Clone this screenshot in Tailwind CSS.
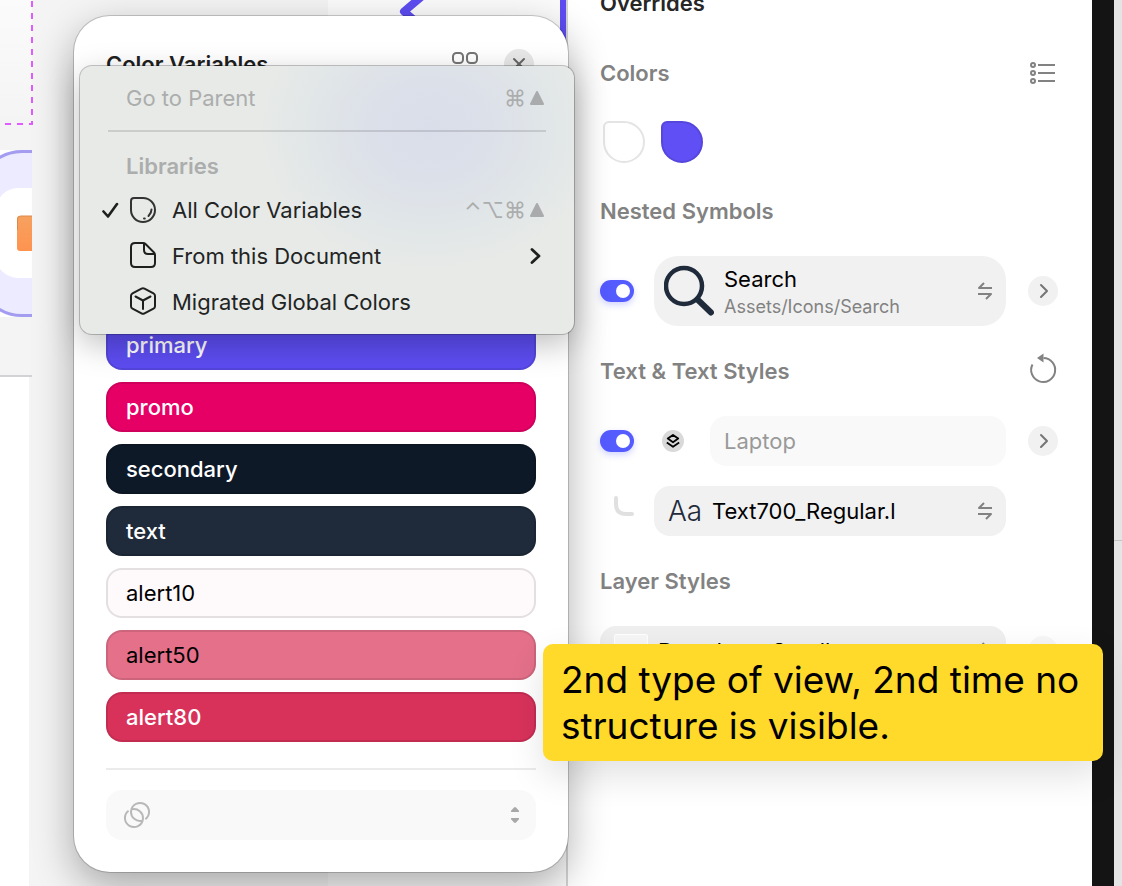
<!DOCTYPE html>
<html lang="en">
<head>
<meta charset="utf-8">
<meta name="viewport" content="width=device-width, initial-scale=1">
<title>Color Variables</title>
<script src="https://cdn.jsdelivr.net/npm/@tailwindcss/browser@4"></script>
</head>
<body class="relative flex h-screen overflow-hidden bg-white font-[Inter,sans-serif] text-[22px] leading-[30px] text-black">

<!-- Canvas -->
<main class="relative flex min-w-0 flex-1 overflow-hidden bg-[#fbfbfb]">
  <div class="w-[328px] shrink-0 bg-[#f4f4f4]">
    <svg class="block" width="34" height="886" viewBox="0 0 34 886" aria-hidden="true">
      <defs><linearGradient id="fade" x1="0" y1="0" x2="0" y2="1"><stop offset="0" stop-color="#fbfbfb"/><stop offset="1" stop-color="#f4f4f4"/></linearGradient>
      <linearGradient id="orange" x1="0" y1="0" x2="0" y2="1"><stop offset="0" stop-color="#f6a15f"/><stop offset="1" stop-color="#ff9350"/></linearGradient>
      <clipPath id="frame"><rect width="32" height="886"/></clipPath></defs>
      <g clip-path="url(#frame)">
        <rect width="32" height="124" fill="url(#fade)"/>
        <rect y="150" width="32" height="167" fill="#fff"/>
        <rect x="-22" y="151.500" width="120" height="164" rx="44" fill="#edebff" stroke="#a39cf0" stroke-width="3"/>
        <rect x="-4" y="188" width="80" height="90" rx="22" fill="#fff"/>
        <rect x="17" y="216" width="30" height="35" rx="3" fill="url(#orange)"/>
        <path d="M17.500 230v-11q0-3 3-3h12" fill="none" stroke="#dc8a4c"/>
        <path d="M0 376h32" stroke="#d2d2d6" stroke-width="2"/>
        <rect y="377" width="29" height="509" fill="#fff"/>
      </g>
      <path d="M32 1v124" stroke="#e05cff" stroke-width="2" stroke-dasharray="6 6"/>
      <path d="M5 124h28" stroke="#e05cff" stroke-width="2" stroke-dasharray="6 6"/>
    </svg>
  </div>
  <div class="flex flex-1 items-start justify-between">
    <svg class="ml-[66px]" width="40" height="30" viewBox="0 0 40 30" fill="none" aria-hidden="true"><path d="M33-8 10 11.500 33 31" stroke="#5d4df2" stroke-width="8" stroke-linecap="round" stroke-linejoin="round"/></svg>
    <div class="h-16 w-1.5 bg-[#5d4df2]"></div>
  </div>
</main>

<!-- Inspector -->
<aside class="w-[526px] shrink-0 overflow-hidden border-l-2 border-[#d3d3d5] bg-white pr-[34px] pl-8">
  <h1 class="-mt-3 font-semibold text-[#262626]">Overrides</h1>

  <div class="mt-10 flex items-center justify-between font-semibold text-[#828282]">
    <h2>Colors</h2>
    <button type="button" aria-label="Show as list" class="pr-0.5">
      <svg width="28" height="24" viewBox="0 0 28 24" fill="none" stroke="#828282" stroke-width="2"><circle cx="5" cy="4" r="2"/><circle cx="5" cy="12" r="2"/><circle cx="5" cy="20" r="2"/><path d="M10 4h17M10 12h17M10 20h17"/></svg>
    </button>
  </div>
  <div class="mt-[33px] flex gap-4 pl-[3px]">
    <button type="button" aria-label="White" class="size-[42px] rounded-[21px] rounded-tl-[6px] border-2 border-[#e4e4e4] bg-white"></button>
    <button type="button" aria-label="Primary" class="size-[42px] rounded-[21px] rounded-tl-[6px] border-2 border-[#5546dc] bg-[#604ff5]"></button>
  </div>

  <h2 class="mt-[33px] font-semibold text-[#828282]">Nested Symbols</h2>
  <div class="mt-[30px] flex items-center">
    <input type="checkbox" checked aria-label="Search override" class="grid h-[22px] w-[34px] shrink-0 appearance-none items-center justify-end rounded-full bg-[#545bff] pr-1 shadow-[0_3px_6px_#545bff40] before:size-3.5 before:rounded-full before:bg-white before:content-['']">
    <button type="button" class="ml-5 flex h-[70px] min-w-0 flex-1 items-center rounded-3xl bg-[#f1f1f1] pr-3 pl-2.5 text-left">
      <svg class="shrink-0" width="50" height="52" viewBox="0 0 50 52" fill="none" stroke="#1f2a3a" aria-hidden="true"><circle cx="20" cy="21" r="18" stroke-width="4.500"/><path d="m33.500 34.500 13.500 13" stroke-width="6" stroke-linecap="round"/></svg>
      <span class="ml-2.5 flex-1 pt-1"><span class="block leading-7">Search</span><span class="block text-[18px] leading-7 text-[#828282]">Assets/Icons/Search</span></span>
      <svg width="18" height="20" viewBox="0 0 18 20" fill="none" stroke="#828282" stroke-width="2" stroke-linejoin="round" aria-hidden="true"><path d="M16 7H3l5-5M2 13h13l-5 5"/></svg>
    </button>
    <button type="button" aria-label="Open Search" class="ml-[22px] grid size-[30px] place-items-center rounded-full bg-[#f1f1f1]">
      <svg width="16" height="16" viewBox="0 0 16 16" fill="none" stroke="#757575" stroke-width="2" stroke-linecap="round" stroke-linejoin="round"><path d="m6 2 6 6-6 6"/></svg>
    </button>
  </div>

  <div class="mt-[30px] flex items-center justify-between font-semibold text-[#828282]">
    <h2>Text &amp; Text Styles</h2>
    <button type="button" aria-label="Reset text">
      <svg class="overflow-visible" width="30" height="30" viewBox="0 0 30 30" fill="none" stroke="#828282" stroke-width="2"><path d="M4.500 8.500A12 12 0 1 0 15.500 2"/><path d="M15.500-2.500 9 2l6.500 4.500z" fill="#828282" stroke="none"/></svg>
    </button>
  </div>
  <div class="mt-[30px] flex items-center">
    <input type="checkbox" checked aria-label="Laptop override" class="grid h-[22px] w-[34px] shrink-0 appearance-none items-center justify-end rounded-full bg-[#545bff] pr-1 shadow-[0_3px_6px_#545bff40] before:size-3.5 before:rounded-full before:bg-white before:content-['']">
    <button type="button" aria-label="Layer data" class="ml-7 grid size-[22px] place-items-center rounded-full bg-[#d9d9d9]">
      <svg width="14" height="14" viewBox="0 0 14 14" fill="none" stroke="#000" stroke-width="1.800" stroke-linejoin="round"><path d="M7 .9 12.200 4.600 7 8.300 1.800 4.600z"/><path d="m.8 8.600 6.200 4.200 6.200-4.200"/></svg>
    </button>
    <input type="text" aria-label="Text override" placeholder="Laptop" class="ml-[26px] h-[50px] min-w-0 flex-1 rounded-2xl bg-[#f9f9f9] px-3.5 placeholder:text-[#999999]">
    <button type="button" aria-label="Open Laptop" class="ml-[22px] grid size-[30px] place-items-center rounded-full bg-[#f1f1f1]">
      <svg width="16" height="16" viewBox="0 0 16 16" fill="none" stroke="#757575" stroke-width="2" stroke-linecap="round" stroke-linejoin="round"><path d="m6 2 6 6-6 6"/></svg>
    </button>
  </div>
  <div class="mt-5 mr-[52px] flex items-center">
    <svg class="ml-3" width="22" height="30" viewBox="0 0 22 30" fill="none" stroke="#e0e0e0" stroke-width="4" stroke-linecap="round" aria-hidden="true"><path d="M4 2v6q0 10 10 10h6"/></svg>
    <button type="button" class="ml-5 flex h-[50px] min-w-0 flex-1 items-center rounded-2xl bg-[#f1f1f1] pr-3 pl-3.5 text-left">
      <span class="w-11 text-[28px] font-light text-[#1f2a3a]">Aa</span>
      <span class="flex-1">Text700_Regular.l</span>
      <svg width="18" height="20" viewBox="0 0 18 20" fill="none" stroke="#828282" stroke-width="2" stroke-linejoin="round" aria-hidden="true"><path d="M16 7H3l5-5M2 13h13l-5 5"/></svg>
    </button>
  </div>

  <h2 class="mt-[30px] font-semibold text-[#828282]">Layer Styles</h2>
  <div class="mt-[30px] flex items-center">
    <button type="button" class="flex h-[50px] min-w-0 flex-1 items-center rounded-2xl bg-[#efefef] pr-3 pl-3.5 text-left">
      <span class="h-[34px] w-[34px] rounded-xs border border-white bg-[#f7f7f7]"></span>
      <span class="ml-2.5 flex-1">Dropdown Scroll</span>
      <svg width="18" height="20" viewBox="0 0 18 20" fill="none" stroke="#828282" stroke-width="2" stroke-linejoin="round" aria-hidden="true"><path d="M16 7H3l5-5M2 13h13l-5 5"/></svg>
    </button>
    <button type="button" aria-label="Open layer style" class="ml-[22px] size-[30px] rounded-full bg-[#f7f7f7]"></button>
  </div>
</aside>

<!-- Window edge -->
<div class="w-[22px] shrink-0 bg-[#141414]"></div>
<div class="flex w-2 shrink-0 flex-col">
  <div class="h-[541px] border-b border-[#c4c4c4] bg-[#e4e4e4]"></div>
  <div class="flex-1 bg-[#e5e5e5]"></div>
</div>

<!-- Color Variables popover -->
<section class="absolute top-4 left-[74px] flex h-[856px] w-[494px] flex-col rounded-[36px] bg-white px-8 shadow-[0_0_0_1px_rgba(0,0,0,0.18),0_14px_40px_rgba(0,0,0,0.32)]">
  <header class="mt-7 flex h-10 items-center">
    <h2 class="flex-1 font-semibold text-[#1f1f1f]">Color Variables</h2>
    <button type="button" aria-label="Grid view" class="mr-[25px] h-10">
      <svg width="28" height="28" viewBox="0 0 28 28" fill="none" stroke="#757575" stroke-width="2"><rect x="2" y="3" width="10" height="10" rx="3.500"/><rect x="16" y="3" width="10" height="10" rx="3.500"/></svg>
    </button>
    <button type="button" aria-label="Close" class="mr-0.5 grid size-[30px] place-items-center rounded-full bg-[#e8e8e8]">
      <svg width="14" height="14" viewBox="0 0 14 14" fill="none" stroke="#666" stroke-width="2" stroke-linecap="round"><path d="m2 2 10 10M12 2 2 12"/></svg>
    </button>
  </header>
  <div class="mt-auto flex flex-col gap-3">
    <button type="button" class="h-[50px] rounded-2xl border-2 border-black/10 bg-[#5d4df2] px-[18px] text-left font-medium text-white">primary</button>
    <button type="button" class="h-[50px] rounded-2xl border-2 border-black/10 bg-[#e60066] px-[18px] text-left font-medium text-white">promo</button>
    <button type="button" class="h-[50px] rounded-2xl border-2 border-black/10 bg-[#0e1928] px-[18px] text-left font-medium text-white">secondary</button>
    <button type="button" class="h-[50px] rounded-2xl border-2 border-black/10 bg-[#1f2b3a] px-[18px] text-left font-medium text-white">text</button>
    <button type="button" class="h-[50px] rounded-2xl border-2 border-black/10 bg-[#fefafb] px-[18px] text-left">alert10</button>
    <button type="button" class="h-[50px] rounded-2xl border-2 border-black/10 bg-[#e4708a] px-[18px] text-left">alert50</button>
    <button type="button" class="h-[50px] rounded-2xl border-2 border-black/10 bg-[#d8325b] px-[18px] text-left font-medium text-white">alert80</button>
  </div>
  <hr class="mt-[26px] border-t-2 border-[#ebebeb]">
  <div class="mt-5 mb-8 grid">
    <select aria-label="Color variable" class="col-start-1 row-start-1 h-[50px] w-full appearance-none rounded-2xl bg-[#f9f9f9]"><option></option></select>
    <div class="pointer-events-none col-start-1 row-start-1 flex items-center justify-between pr-3.5 pl-[17px]">
      <svg width="28" height="28" viewBox="0 0 28 28" fill="none" stroke="#b8b8b8" stroke-width="2" aria-hidden="true"><path d="M22.400 18.200A9 9 0 1 0 19.600 19.600M5.600 9.800A9 9 0 1 0 8.400 8.400"/></svg>
      <svg width="14" height="20" viewBox="0 0 14 20" fill="#a8a8a8" aria-hidden="true"><path d="M6 2.400q1-.8 2 0l3 3.300q.6 1.300-.8 1.300H3.800Q2.400 7 3 5.700zM6 17.600q1 .8 2 0l3-3.300q.6-1.300-.8-1.300H3.800q-1.400 0-.8 1.300z"/></svg>
    </div>
  </div>
</section>

<!-- Library menu -->
<nav class="absolute top-[66px] left-20 flex h-[268px] w-[494px] flex-col rounded-xl bg-[#e7eae7] bg-[radial-gradient(ellipse_170px_140px_at_350px_64px,#dadeea,#dce0e9_35%,#e1e6e8_70%,#e7eae7)] py-[9px] px-7 text-[#222423] shadow-[0_0_0_1px_rgba(0,0,0,0.22),0_10px_32px_rgba(0,0,0,0.26)]">
  <button type="button" disabled class="flex h-[46px] items-center justify-between pr-px pl-[18px] text-[#acadad]"><span>Go to Parent</span><span class="flex gap-[3px]"><kbd class="font-[Inter,sans-serif]">⌘</kbd><svg class="mt-[7px]" width="16" height="16" viewBox="0 0 16 16" fill="#a9abac" stroke="#a9abac" stroke-width="2" stroke-linejoin="round"><path d="M8 2 14 14H2z"/></svg></span></button>
  <hr class="mt-[9px] border-t-2 border-black/12">
  <h3 class="mt-[13px] flex h-[42px] items-center pl-[18px] font-semibold text-[#acadad]">Libraries</h3>
  <button type="button" class="flex h-[46px] items-center pr-px text-left">
    <svg class="-ml-1.5" width="17" height="18" viewBox="0 0 17 18" fill="none" stroke="#1f1f1f" stroke-width="2.600" stroke-linecap="round" stroke-linejoin="round" aria-hidden="true"><path d="m1.500 10.500 4.500 5L15 3"/></svg>
    <svg class="ml-[10px]" width="28" height="28" viewBox="0 0 28 28" fill="none" stroke="#333" stroke-width="2" stroke-linecap="round" aria-hidden="true"><path d="M2 5q0-3 3-3h9a12 12 0 1 1-12 12z"/><path d="M22.500 13.500q0 3.500-3 6.500M15 22.500h.8"/></svg>
    <span class="ml-[15px] flex-1">All Color Variables</span>
    <span class="flex gap-[3px] text-[#acadad]"><kbd class="font-[Inter,sans-serif]">⌃⌥⌘</kbd><svg class="mt-[7px]" width="16" height="16" viewBox="0 0 16 16" fill="#a9abac" stroke="#a9abac" stroke-width="2" stroke-linejoin="round"><path d="M8 2 14 14H2z"/></svg></span>
  </button>
  <button type="button" class="flex h-[46px] items-center pl-[21px] text-left">
    <svg width="28" height="28" viewBox="0 0 28 28" fill="none" stroke="#1f1f1f" stroke-width="2" stroke-linejoin="round" aria-hidden="true"><path d="M6 1h8q1.500 0 2.500 1l8.500 8.500q1 1 1 2.500v8q0 4-4 4H6q-4 0-4-4V5q0-4 4-4z"/><path d="M15 1.500V8q0 4 4 4h6.500"/></svg>
    <span class="ml-[15px] flex-1">From this Document</span>
    <svg class="mr-[3px]" width="16" height="20" viewBox="0 0 16 20" fill="none" stroke="#1f1f1f" stroke-width="2.800" stroke-linecap="round" stroke-linejoin="round" aria-hidden="true"><path d="m5 3.500 7 6.500-7 6.500"/></svg>
  </button>
  <button type="button" class="flex h-[46px] items-center pl-[21px] text-left">
    <svg width="28" height="30" viewBox="0 0 28 30" fill="none" stroke="#1f1f1f" stroke-width="2" stroke-linecap="round" stroke-linejoin="round" aria-hidden="true"><path d="M12.500 1.600q1.500-.8 3 0l9 4.700Q26 7.100 26 8.800v10.400q0 1.700-1.500 2.500l-9 4.700q-1.500.8-3 0l-9-4.700Q2 20.900 2 19.200V8.800q0-1.700 1.500-2.500z"/><path d="m6.500 9.500 7.500 4 7.500-4M14 13.500V22"/></svg>
    <span class="ml-[15px]">Migrated Global Colors</span>
  </button>
</nav>

<!-- Annotation -->
<p class="absolute top-[644px] left-[543px] w-[560px] rounded-[10px] bg-[#ffda2b] px-[18px] pt-[13px] pb-3 text-[37px] leading-[46px] shadow-[0_14px_36px_rgba(0,0,0,0.12)]">2nd type of view, 2nd time no structure is visible.</p>
</body>
</html>
